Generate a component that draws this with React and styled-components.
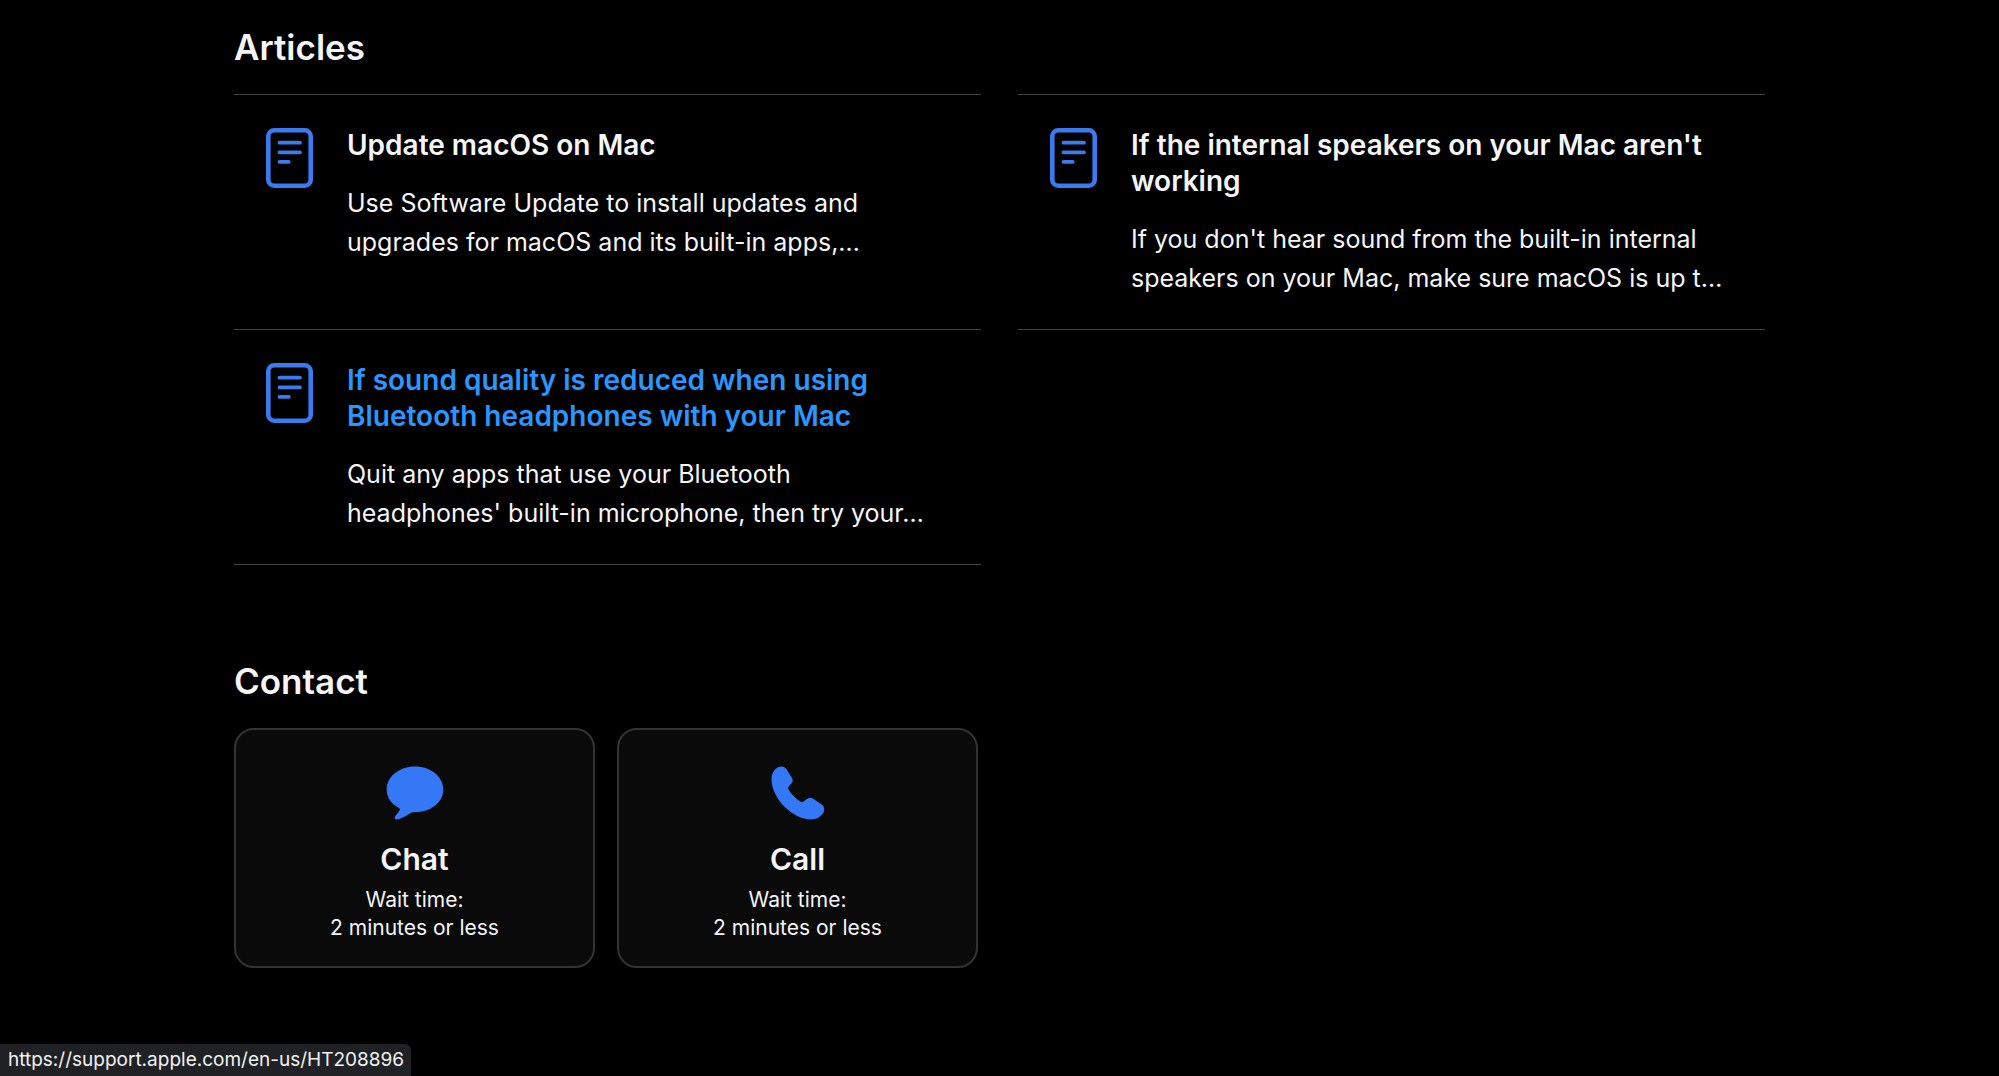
import React from 'react';
import styled, { createGlobalStyle } from 'styled-components';

const GlobalStyle = createGlobalStyle`
  * {
    box-sizing: border-box;
  }

  body {
    margin: 0;
    background-color: #000;
    color: #f5f5f7;
    font-family: Inter, 'Liberation Sans', sans-serif;
  }
`;

const Page = styled.main`
  max-width: 1595px;
  margin: 0 auto;
  padding: 23px 32px 107px;
`;

const Section = styled.section`
  & + & {
    margin-top: 92px;
  }
`;

const SectionTitle = styled.h2`
  margin: 0 0 23px;
  font-size: 35px;
  line-height: 48px;
  font-weight: 600;
`;

const ArticleGrid = styled.ul`
  display: grid;
  grid-template-columns: 1fr 1fr;
  column-gap: 37px;
  margin: 0;
  padding: 0;
  list-style: none;
`;

const ArticleItem = styled.li`
  border-bottom: 1px solid #424245;

  &:nth-child(-n + 2) {
    border-top: 1px solid #424245;
  }
`;

const ArticleLink = styled.a`
  display: flex;
  gap: 34px;
  padding: 32px 32px 31px;
  color: inherit;
  text-decoration: none;
`;

const ArticleIcon = styled.svg`
  flex: none;
  width: 47px;
  height: 60px;
  margin-top: 1px;
`;

const ArticleTitle = styled.h3`
  margin: 0 0 21px;
  font-size: 28px;
  line-height: 36px;
  font-weight: 600;
  color: ${(props) => (props.$active ? '#2997ff' : 'inherit')};
`;

const ArticleText = styled.p`
  margin: 0;
  font-size: 25px;
  line-height: 39px;
`;

const ContactList = styled.div`
  display: grid;
  grid-template-columns: repeat(auto-fill, 361px);
  gap: 22px;
`;

const ContactCard = styled.button`
  display: flex;
  flex-direction: column;
  align-items: center;
  padding: 36px 16px 24px;
  border: 2px solid #333336;
  border-radius: 20px;
  background-color: #0a0a0a;
  color: inherit;
  font-family: inherit;
  cursor: pointer;
`;

const ContactIcon = styled.svg`
  width: 58px;
  height: 54px;
`;

const ContactName = styled.span`
  margin-top: 20px;
  font-size: 30px;
  line-height: 38px;
  font-weight: 600;
`;

const ContactWait = styled.span`
  margin-top: 8px;
  font-size: 21px;
  line-height: 28px;
`;

const StatusBar = styled.div`
  position: fixed;
  left: 0;
  bottom: 0;
  padding: 0 7px 0 8px;
  border-top-right-radius: 6px;
  background-color: #202124;
  color: #f1f3f4;
  font-size: 19px;
  line-height: 32px;
`;

const articles = [
  {
    href: '#update-macos',
    title: 'Update macOS on Mac',
    text: 'Use Software Update to install updates and upgrades for macOS and its built-in apps,…',
  },
  {
    href: '#internal-speakers',
    title: "If the internal speakers on your Mac aren't working",
    text: "If you don't hear sound from the built-in internal speakers on your Mac, make sure macOS is up t…",
  },
  {
    href: 'https://support.apple.com/en-us/HT208896',
    title: 'If sound quality is reduced when using Bluetooth headphones with your Mac',
    text: "Quit any apps that use your Bluetooth headphones' built-in microphone, then try your…",
    active: true,
  },
];

const DocumentIcon = () => (
  <ArticleIcon viewBox="0 0 47 60" fill="none" stroke="#3b7bf0" strokeLinecap="round" aria-hidden="true">
    <rect x="2.3" y="2.3" width="42.4" height="55.4" rx="6" strokeWidth="4.6" />
    <path d="M13.5 14.7h20.500M13.5 24.3h20.500M13.5 33.9h9.300" strokeWidth="3.8" />
  </ArticleIcon>
);

const ChatIcon = () => (
  <ContactIcon viewBox="0 0 58 54" fill="#3478f6" aria-hidden="true">
    <path d="M29 0.500C13.200 0.500 0.700 10.700 0.700 23.500c0 7.600 4.200 14.200 11.800 18.200 1.400.8 1.700 1.700 1 2.900-1 1.900-2.900 3.900-4.300 5.600-1.200 1.600-.6 3.200 1.300 3.200 3.200 0 8.800-2.900 13.300-5.900 1.500-1 2.900-1.300 5.200-1.300 15.800 0 28.300-9.900 28.300-22.700S44.800 0.500 29 0.500Z" />
  </ContactIcon>
);

const PhoneIcon = () => (
  <ContactIcon viewBox="0 0 58 54" fill="#3478f6" aria-hidden="true">
    <path d="M42 53.500c-9 0-19-5.200-26.200-12.400C8.300 33.600 2.500 23 2.500 13.500c0-4.500 1.400-8.200 4.500-10.900C8.600 1.200 10.500.5 12.300.5c2 0 3.800.8 5.100 2.600l5.300 8.400c1 1.500 1.300 3.200.7 4.600-1 2.500-3.400 3.300-4.100 5.200-.3.900.1 1.900.7 2.900 2.400 3.700 6.500 8.300 10.400 10.900 1.100.7 2.200 1.200 3.200.8 2-.6 3.300-2.800 5.700-3.700 1.500-.7 3.400-.4 4.900.6l8.100 5.500c1.900 1.300 2.900 3.200 2.900 5.100 0 1.800-.8 3.600-2.200 5.200-2.900 3.300-6 4.900-11 4.900Z" />
  </ContactIcon>
);

const contacts = [
  { name: 'Chat', Icon: ChatIcon },
  { name: 'Call', Icon: PhoneIcon },
];

const App = () => {
  return (
    <>
      <GlobalStyle />
      <Page>
        <Section>
          <SectionTitle>Articles</SectionTitle>
          <ArticleGrid>
            {articles.map((article) => (
              <ArticleItem key={article.href}>
                <ArticleLink href={article.href}>
                  <DocumentIcon />
                  <div>
                    <ArticleTitle $active={article.active}>{article.title}</ArticleTitle>
                    <ArticleText>{article.text}</ArticleText>
                  </div>
                </ArticleLink>
              </ArticleItem>
            ))}
          </ArticleGrid>
        </Section>

        <Section>
          <SectionTitle>Contact</SectionTitle>
          <ContactList>
            {contacts.map(({ name, Icon }) => (
              <ContactCard key={name} type="button">
                <Icon />
                <ContactName>{name}</ContactName>
                <ContactWait>
                  Wait time:
                  <br />2 minutes or less
                </ContactWait>
              </ContactCard>
            ))}
          </ContactList>
        </Section>
      </Page>
      <StatusBar>https://support.apple.com/en-us/HT208896</StatusBar>
    </>
  );
};

export default App;
